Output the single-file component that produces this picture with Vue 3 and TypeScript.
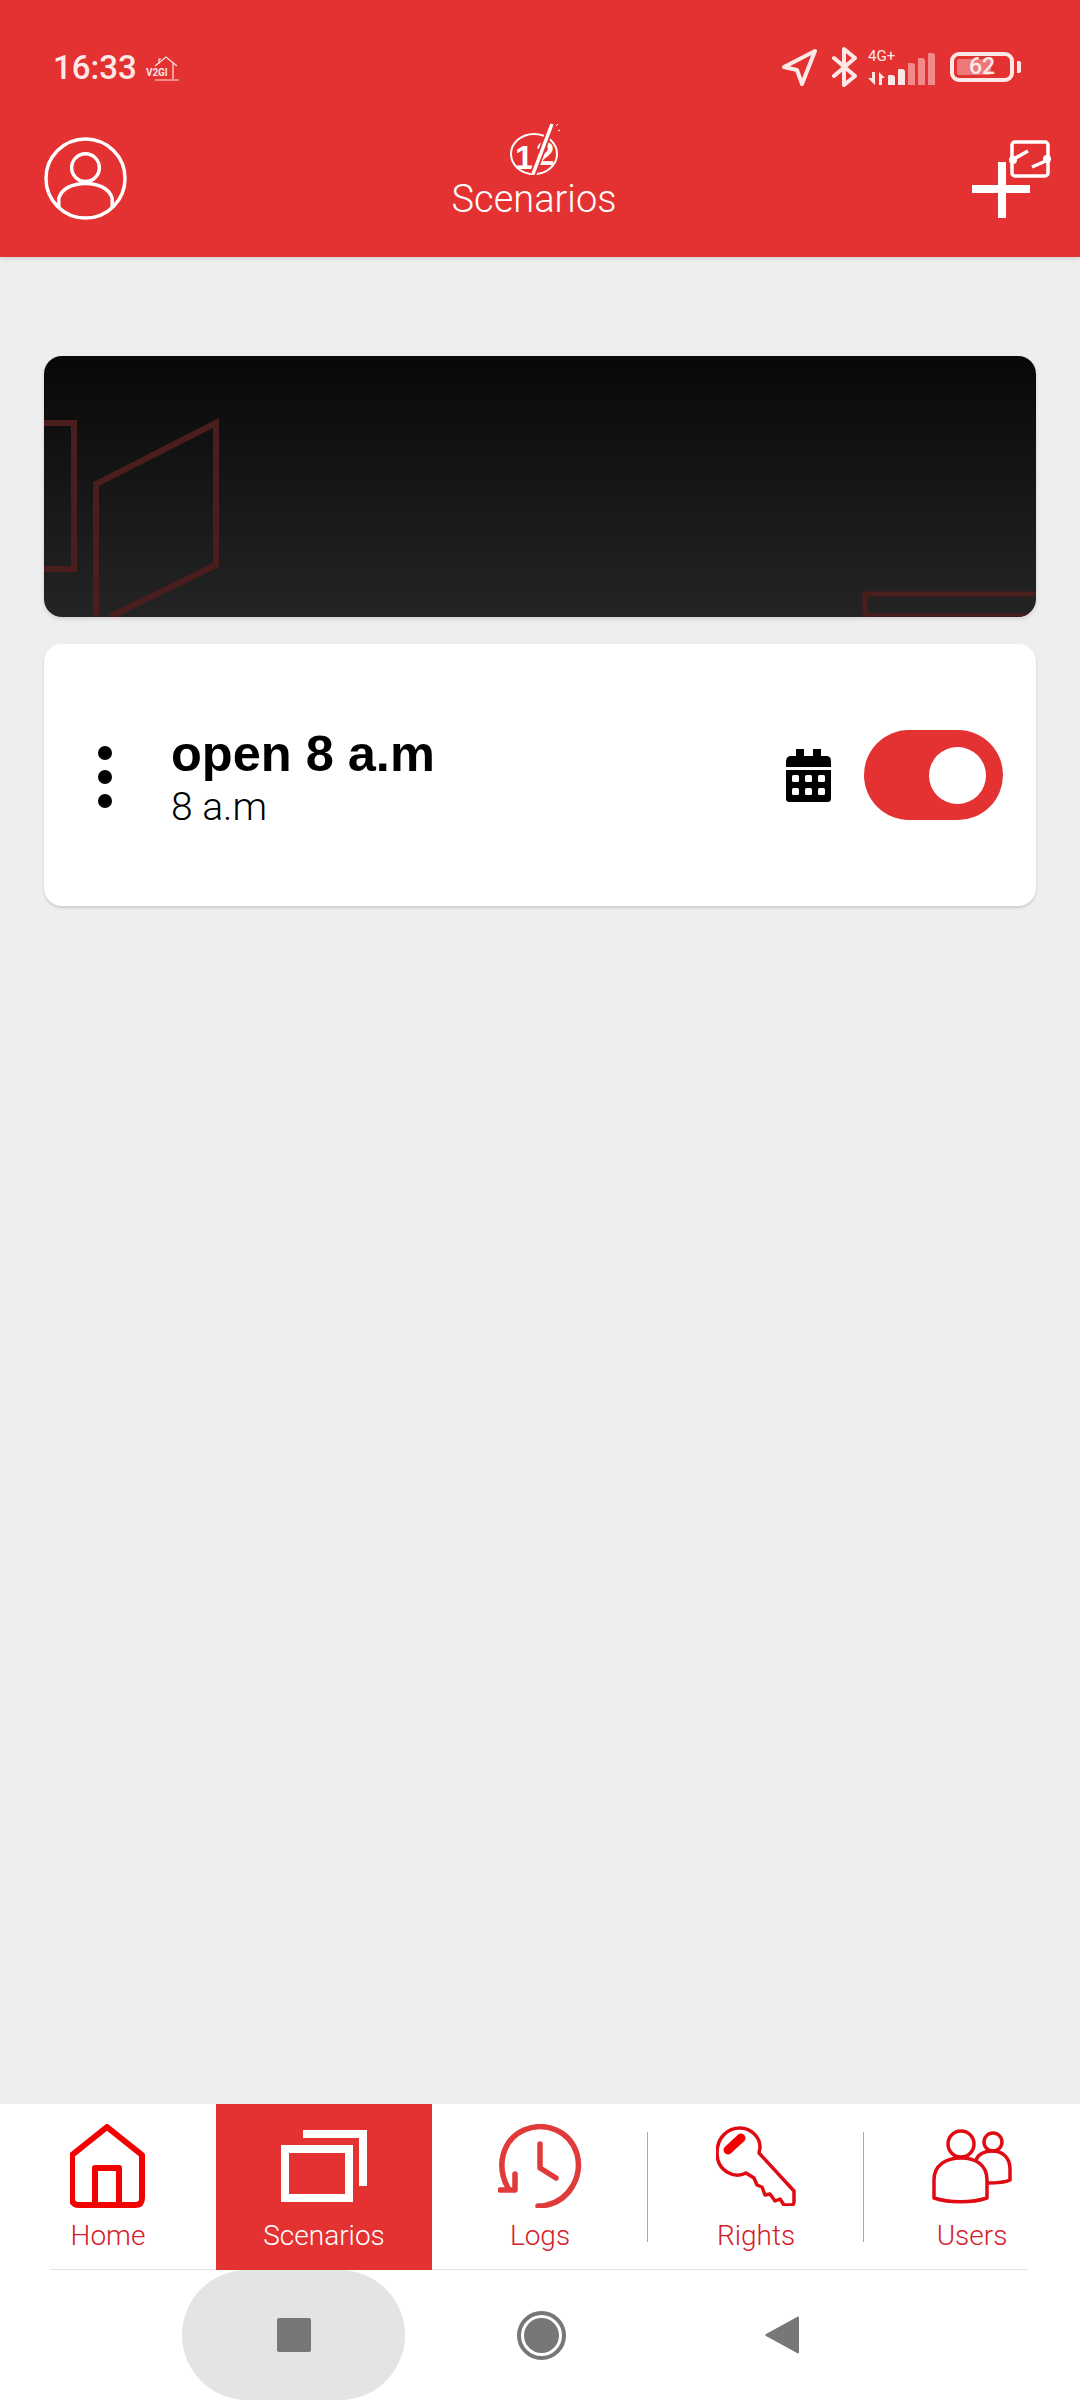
<template>
  <div class="page">
    <header class="header">
      <div class="status">
        <div class="status-left">
          <span class="time">16:33</span>
          <svg class="house" viewBox="0 0 33 25" fill="none" stroke="#fbe3e3" stroke-width="1.2">
            <path d="M9 10 20 1l11 9M13 8V3h2M27 7v16M9 24h24" />
            <text x="0" y="20" class="tiny">V2</text>
            <text x="12" y="20" class="tiny">GI</text>
          </svg>
        </div>
        <div class="status-right">
          <svg class="loc" viewBox="0 0 36 38" fill="none" stroke="#fde8e8" stroke-width="4" stroke-linejoin="round">
            <path d="M34 3 3 19l13 3 5 14z" />
          </svg>
          <svg class="bt" viewBox="0 0 25 40" fill="none" stroke="#fde8e8" stroke-width="4" stroke-linejoin="round" stroke-linecap="round">
            <path d="M2 11 23 29 12 38V2l11 9L2 29" />
          </svg>
          <div class="net">
            <span class="net-label">4G+</span>
            <div class="net-row">
              <svg class="arrows" viewBox="0 0 20 13" fill="#fde8e8">
                <path d="M0 6h4V0h3v13zM11 13V0l6 6h-3v7z" />
              </svg>
              <div class="bars">
                <i v-for="bar in signalBars" :key="bar.height" :class="{ dim: bar.dim }" :style="{ height: bar.height + 'px' }"></i>
              </div>
            </div>
          </div>
          <div class="battery">
            <div class="battery-body">
              <div class="battery-fill"></div>
              <span class="battery-text">62</span>
            </div>
            <div class="battery-cap"></div>
          </div>
        </div>
      </div>
      <div class="toolbar">
        <svg class="avatar" viewBox="0 0 84 84" fill="none" stroke="#fff" stroke-width="3.5">
          <circle cx="42" cy="42" r="40" />
          <circle cx="42" cy="31" r="14" />
          <path d="M15 71V62c3-10 14-15 27-15s24 5 27 15v9" />
        </svg>
        <div class="title-block">
          <svg class="logo" viewBox="0 0 52 54" fill="none">
            <ellipse cx="26" cy="32" rx="23" ry="20" stroke="#fff" stroke-width="2" />
            <text x="7" y="47" class="logo-text">1</text>
            <text x="28" y="43" class="logo-text">2</text>
            <path d="M44 2 25 52" stroke="#e43131" stroke-width="7" />
            <path d="M44 2 25 52" stroke="#fff" stroke-width="3.5" />
            <path d="M48 4l2-2M50 9l2-1" stroke="#fff" stroke-width="1" />
          </svg>
          <span class="title">Scenarios</span>
        </div>
        <svg class="add" viewBox="0 0 82 78" fill="none" stroke="#fff">
          <path d="M33 22v56M3 49h58" stroke-width="8" />
          <rect x="43" y="2" width="36" height="34" rx="3" stroke-width="3.5" />
          <path d="M43 20 59 11M63 27l16-7" stroke-width="3.5" />
          <circle cx="44" cy="20" r="4" fill="#fff" stroke="none" />
          <circle cx="78" cy="19" r="4" fill="#fff" stroke="none" />
        </svg>
      </div>
    </header>

    <main class="content">
      <div class="banner">
        <svg class="banner-art" viewBox="0 0 992 261" fill="none" stroke="#4b1e1e" stroke-width="6">
          <path d="M0 67h30v146H0" />
          <path d="M52 261V128L172 67v142L66 261" />
          <path d="M821 261V238h171" stroke-width="5" />
          <path d="M821 259h171" stroke-width="3" />
        </svg>
      </div>

      <div class="card">
        <div class="dots"><i></i><i></i><i></i></div>
        <div class="card-text">
          <div class="card-title">open 8 a.m</div>
          <div class="card-sub">8 a.m</div>
        </div>
        <svg class="calendar" viewBox="0 0 47 53">
          <path d="M1 13c0-4 2-6 5-6h5V0h8v7h9V0h8v7h5c4 0 5 2 5 6v5H1zM1 21h45v28c0 3-1 4-4 4H5c-3 0-4-1-4-4z" fill="#000" />
          <g fill="#fff">
            <rect x="7" y="26" width="7" height="7" rx="1.5" />
            <rect x="20" y="26" width="7" height="7" rx="1.5" />
            <rect x="33" y="26" width="7" height="7" rx="1.5" />
            <rect x="7" y="39" width="7" height="7" rx="1.5" />
            <rect x="20" y="39" width="7" height="7" rx="1.5" />
            <rect x="33" y="39" width="7" height="7" rx="1.5" />
          </g>
        </svg>
        <div class="toggle"><div class="knob"></div></div>
      </div>
    </main>

    <nav class="tabs">
      <div v-for="tab in tabs" :key="tab.label" :class="['tab', tab.key, { active: tab.key === 'scenarios' }]">
        <div class="tab-icon">
          <svg v-if="tab.key === 'home'" width="76" height="84" viewBox="0 0 76 84" fill="none" stroke="#f30000" stroke-width="6" stroke-linejoin="round">
            <path d="M37 3 72 31v43c0 5-2 7-7 7H9c-5 0-7-2-7-7V31z" />
            <path d="M25 81V44h24v37" />
          </svg>
          <svg v-else-if="tab.key === 'scenarios'" width="86" height="72" viewBox="0 0 86 72" fill="none" stroke="#fff" stroke-width="8">
            <path d="M22 4h60v52" />
            <rect x="4" y="19" width="64" height="49" />
          </svg>
          <svg v-else-if="tab.key === 'logs'" width="84" height="84" viewBox="0 0 84 84" fill="none" stroke="#e13a3a" stroke-width="5.5" stroke-linecap="round" stroke-linejoin="round">
            <path d="M10 64C-2 42 4 16 26 6 48-3 72 7 79 30c6 23-8 46-30 51-3 1-6 1-9 1" />
            <path d="M2 66h15V50" />
            <path d="M42 20v24l16 10" />
          </svg>
          <svg v-else-if="tab.key === 'rights'" width="80" height="80" viewBox="0 0 80 80" fill="none" stroke="#e00a12" stroke-width="3.5" stroke-linejoin="round">
            <path d="M43 27 78 65v11c0 2-1 3-3 3h-7l-4-6-5 2-5-7-5 1-3-8-5-2-3-7-8-5c-12 6-29-2-29-20C1 11 12 2 24 2s20 10 20 19c0 3-1 4-1 6z" />
            <path d="M12 24 25 12" stroke="#f30000" stroke-width="9" stroke-linecap="round" />
          </svg>
          <svg v-else width="80" height="76" viewBox="0 0 80 76" fill="none" stroke="#e00a12" stroke-width="3.5" stroke-linejoin="round">
            <circle cx="29" cy="16" r="13" />
            <circle cx="61" cy="14" r="9" />
            <path d="M2 70V52c0-15 12-22 27-22s26 7 26 22v18c-15 5-38 5-53 0z" />
            <path d="M44 32c2-6 9-9 16-9 11 0 18 7 18 18v11c-6 3-14 3-23 3" />
          </svg>
        </div>
        <span class="tab-label">{{ tab.label }}</span>
      </div>
    </nav>

    <div class="system-bar">
      <div class="sys-pill"><div class="sys-square"></div></div>
      <div class="sys-circle"><div></div></div>
      <svg class="sys-back" viewBox="0 0 36 38" fill="#777">
        <path d="M35 2v34c0 1-1 2-2 1L2 20c-1-1-1-1 0-2L33 1c1-1 2 0 2 1z" />
      </svg>
    </div>
  </div>
</template>

<script setup lang="ts">
type Tab = {
  key: string;
  label: string;
};

const tabs: Tab[] = [
  { key: "home", label: "Home" },
  { key: "scenarios", label: "Scenarios" },
  { key: "logs", label: "Logs" },
  { key: "rights", label: "Rights" },
  { key: "users", label: "Users" },
];

const signalBars = [
  { height: 10, dim: false },
  { height: 16, dim: false },
  { height: 22, dim: true },
  { height: 27, dim: true },
  { height: 32, dim: true },
];
</script>

<style>
body {
  margin: 0;
}
</style>

<style scoped>
.page {
  width: 1080px;
  height: 2400px;
  display: flex;
  flex-direction: column;
  background: #eeeeee;
  font-family: Roboto, "Liberation Sans", sans-serif;
}

.header {
  height: 257px;
  box-sizing: border-box;
  padding-top: 46px;
  background: #e43131;
  box-shadow: 0 2px 4px rgba(0, 0, 0, 0.12);
  color: #fff;
  flex: none;
}

.status {
  height: 42px;
  display: flex;
  align-items: center;
  justify-content: space-between;
  padding: 0 59px 0 53px;
}

.status-left,
.status-right {
  display: flex;
  align-items: center;
}

.time {
  font-size: 33px;
  font-weight: 500;
  color: #fde8e8;
}

.house {
  width: 33px;
  height: 25px;
  margin-left: 9px;
  margin-top: 3px;
}

.tiny {
  font-size: 10px;
  font-weight: 700;
  fill: #fbe3e3;
  stroke: none;
}

.loc {
  width: 36px;
  height: 38px;
}

.bt {
  width: 25px;
  height: 40px;
  margin-left: 15px;
}

.net {
  margin-left: 11px;
  width: 67px;
  display: flex;
  flex-direction: column;
}

.net-label {
  font-size: 15px;
  line-height: 14px;
  color: #fde8e8;
  margin-bottom: -10px;
}

.net-row {
  display: flex;
  align-items: flex-end;
  justify-content: space-between;
}

.arrows {
  width: 20px;
  height: 13px;
}

.bars {
  display: flex;
  align-items: flex-end;
  gap: 3px;
}

.bars i {
  width: 7px;
  background: #fde8e8;
  border-radius: 1px 3px 0 0;
}

.bars i.dim {
  background: #f28a8a;
}

.battery {
  margin-left: 15px;
  display: flex;
  align-items: center;
}

.battery-body {
  width: 64px;
  height: 30px;
  box-sizing: border-box;
  border: 4px solid #fde8e8;
  border-radius: 9px;
  padding: 3px;
  display: flex;
  align-items: stretch;
}

.battery-fill {
  width: 34px;
  background: #ee7777;
  border-radius: 2px;
}

.battery-text {
  font-size: 23px;
  font-weight: 500;
  line-height: 16px;
  margin-left: -22px;
  color: #fde8e8;
}

.battery-cap {
  width: 4px;
  height: 12px;
  margin-left: 3px;
  background: #fde8e8;
  border-radius: 0 2px 2px 0;
}

.toolbar {
  display: flex;
  align-items: flex-start;
  justify-content: space-between;
  padding: 34px 29px 0 44px;
}

.avatar {
  width: 83px;
  height: 83px;
  margin-top: 15px;
}

.title-block {
  display: flex;
  flex-direction: column;
  align-items: center;
  margin-left: -28px;
}

.logo {
  width: 52px;
  height: 54px;
}

.logo-text {
  font-family: "Liberation Sans", sans-serif;
  font-size: 33px;
  font-weight: 700;
  fill: #fff;
}

.title {
  font-size: 38px;
  font-weight: 300;
  line-height: 40px;
  margin-top: 3px;
}

.add {
  width: 82px;
  height: 78px;
  margin-top: 18px;
}

.content {
  flex: 1;
  padding: 99px 44px 0;
  display: flex;
  flex-direction: column;
  gap: 27px;
}

.banner {
  height: 261px;
  border-radius: 18px;
  overflow: hidden;
  background: linear-gradient(#080808, #242424);
  box-shadow: 0 2px 4px rgba(0, 0, 0, 0.12);
}

.banner-art {
  display: block;
  width: 992px;
  height: 261px;
}

.card {
  height: 262px;
  display: flex;
  align-items: center;
  background: #fff;
  border-radius: 18px;
  box-shadow: 0 2px 3px rgba(0, 0, 0, 0.14);
  padding: 0 33px 0 54px;
}

.dots {
  display: flex;
  flex-direction: column;
  gap: 10px;
  margin-top: 3px;
}

.dots i {
  width: 14px;
  height: 14px;
  background: #000;
  border-radius: 50%;
}

.card-text {
  margin-left: 59px;
  flex: 1;
  margin-top: 2px;
}

.card-title {
  font-family: "Liberation Sans", sans-serif;
  font-weight: 700;
  font-size: 50.5px;
  line-height: 56px;
  color: #000;
}

.card-sub {
  font-size: 39px;
  font-weight: 300;
  line-height: 40px;
  margin-top: 5px;
  color: #000;
}

.calendar {
  width: 47px;
  height: 53px;
  margin-right: 32px;
}

.toggle {
  width: 139px;
  height: 90px;
  box-sizing: border-box;
  background: #e43131;
  border-radius: 45px;
  display: flex;
  align-items: center;
  justify-content: flex-end;
  padding-right: 17px;
}

.knob {
  width: 57px;
  height: 57px;
  background: #fff;
  border-radius: 50%;
}

.tabs {
  height: 166px;
  flex: none;
  display: grid;
  grid-template-columns: repeat(5, 216px);
  background: #fff;
  position: relative;
}

.tabs::after {
  content: "";
  position: absolute;
  left: 50px;
  right: 52px;
  bottom: 0;
  height: 1px;
  background: #e2e2e2;
}

.tab {
  display: flex;
  flex-direction: column;
  align-items: center;
  color: #d3202a;
  position: relative;
  z-index: 1;
}

.tab.active {
  background: #e43131;
  color: #fff;
}

.tab.logs::after,
.tab.rights::after {
  content: "";
  position: absolute;
  right: 0;
  top: 28px;
  height: 110px;
  width: 1px;
  background: #aaaaaa;
}

.tab-icon {
  height: 84px;
  margin-top: 20px;
  display: flex;
  align-items: center;
  justify-content: center;
}

.tab-label {
  font-size: 28px;
  font-weight: 300;
  line-height: 34px;
  margin-top: 11px;
}

.system-bar {
  flex: none;
  height: 130px;
  background: #fff;
  display: flex;
  align-items: center;
}

.sys-pill {
  width: 223px;
  height: 130px;
  margin-left: 182px;
  background: #e4e4e4;
  border-radius: 65px;
  display: flex;
  align-items: center;
  justify-content: center;
}

.sys-square {
  width: 34px;
  height: 34px;
  background: #777;
  border-radius: 2px;
}

.sys-circle {
  width: 49px;
  height: 49px;
  margin-left: 112px;
  box-sizing: border-box;
  border: 4px solid #777;
  border-radius: 50%;
  padding: 3px;
}

.sys-circle div {
  width: 100%;
  height: 100%;
  background: #777;
  border-radius: 50%;
}

.sys-back {
  width: 36px;
  height: 38px;
  margin-left: 198px;
}
</style>
